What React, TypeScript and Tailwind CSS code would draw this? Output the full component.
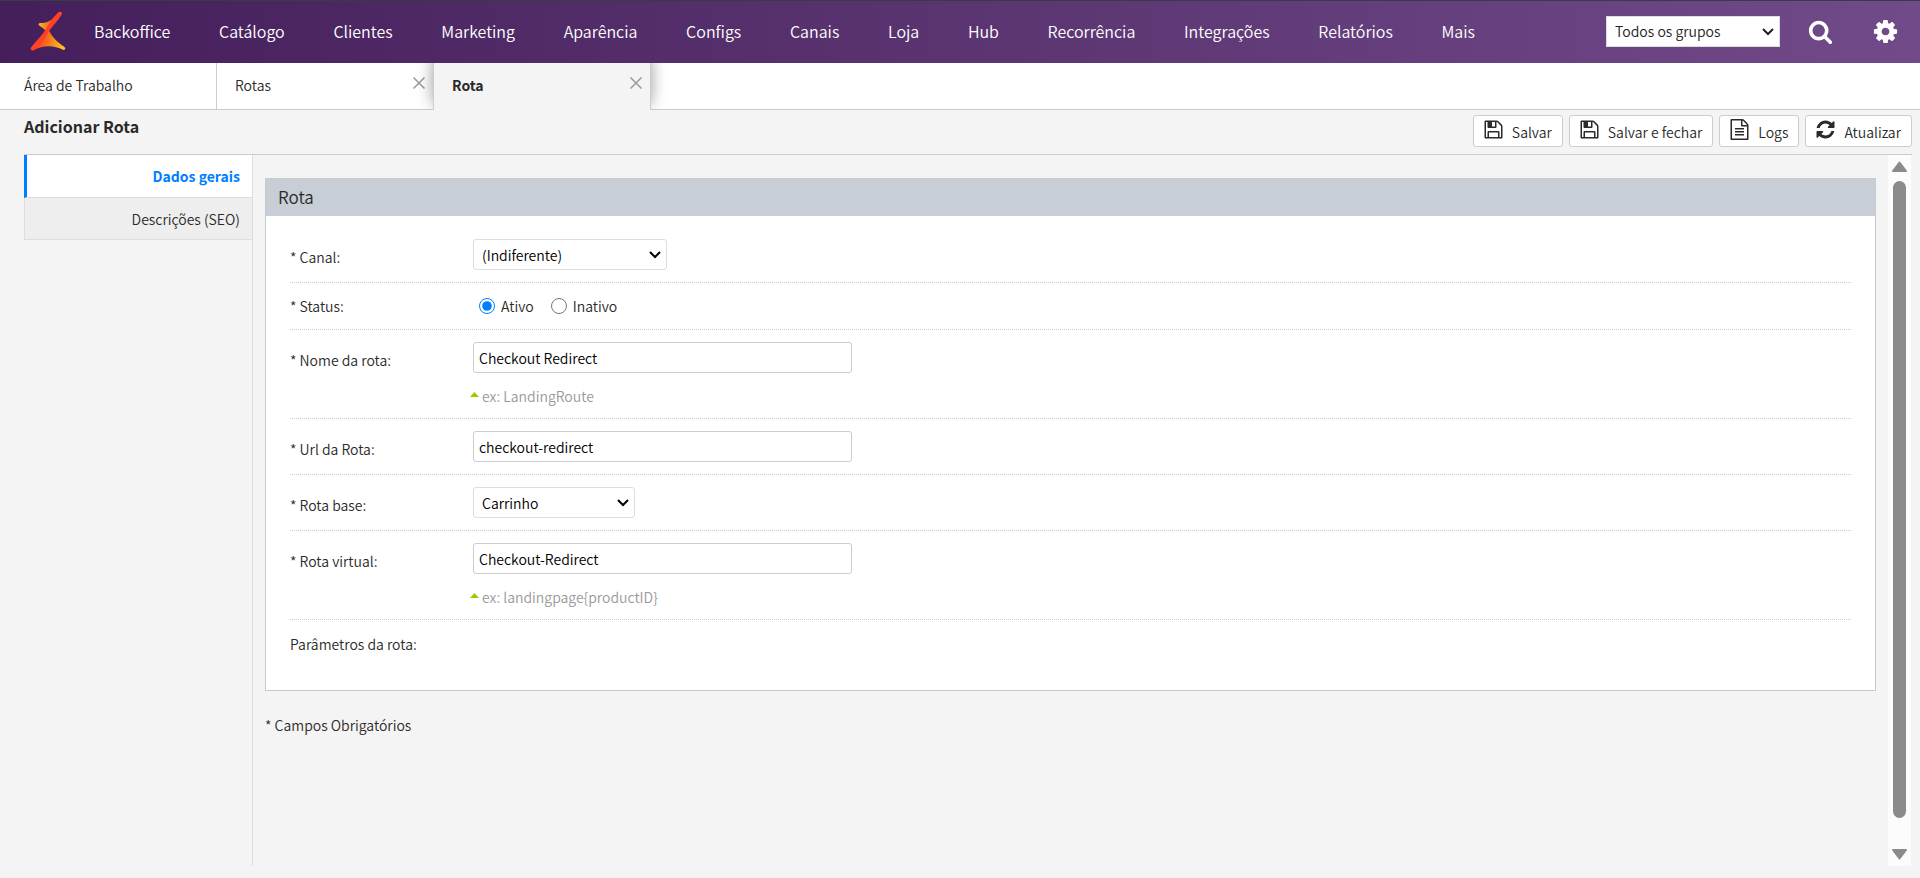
import type { ReactNode } from "react";

const menu = [
  "Backoffice", "Catálogo", "Clientes", "Marketing", "Aparência", "Configs", "Canais",
  "Loja", "Hub", "Recorrência", "Integrações", "Relatórios", "Mais",
];

const icons = {
  search:
    "M1216 832q0-185-131.5-316.5t-316.5-131.5-316.5 131.5-131.5 316.5 131.5 316.5 316.5 131.5 316.5-131.5 131.5-316.5zm512 832q0 52-38 90t-90 38q-54 0-90-38l-343-342q-179 124-399 124-143 0-273.5-55.5t-225-150-150-225-55.5-273.5 55.5-273.5 150-225 225-150 273.5-55.5 273.5 55.5 225 150 150 225 55.5 273.5q0 220-124 399l343 343q37 37 37 90z",
  cog:
    "M1152 896q0-106-75-181t-181-75-181 75-75 181 75 181 181 75 181-75 75-181zm512-109v222q0 12-8 23t-20 13l-185 28q-19 54-39 91 35 50 107 138 10 12 10 25t-9 23q-27 37-99 108t-94 71q-12 0-26-9l-138-108q-44 23-91 38-16 136-29 186-7 28-36 28h-222q-14 0-24.5-8.5t-11.5-21.5l-28-184q-49-16-90-37l-141 107q-10 9-25 9-14 0-25-11-126-114-165-168-7-10-7-23 0-12 8-23 15-21 51-66.5t54-70.5q-27-50-41-99l-183-27q-13-2-21-12.5t-8-23.5v-222q0-12 8-23t19-13l186-28q14-46 39-92-40-57-107-138-10-12-10-24 0-10 9-23 26-36 98.5-107.5t94.5-71.5q13 0 26 10l138 107q44-23 91-38 16-136 29-186 7-28 36-28h222q14 0 24.5 8.5t11.5 21.5l28 184q49 16 90 37l142-107q9-9 24-9 13 0 25 10 129 119 165 170 7 8 7 22 0 12-8 23-15 21-51 66.5t-54 70.5q26 50 41 98l183 28q13 2 21 12.5t8 23.5z",
  save:
    "M512 1536h768v-384h-768v384zm896 0h128v-896q0-14-10-38.5t-20-34.5l-281-281q-10-10-34-20t-39-10v416q0 40-28 68t-68 28h-576q-40 0-68-28t-28-68v-416h-128v1280h128v-416q0-40 28-68t68-28h832q40 0 68 28t28 68v416zm-384-928v-320q0-13-9.5-22.5t-22.5-9.5h-192q-13 0-22.5 9.5t-9.5 22.5v320q0 13 9.5 22.5t22.5 9.5h192q13 0 22.5-9.5t9.5-22.5zm640 32v928q0 40-28 68t-68 28h-1344q-40 0-68-28t-28-68v-1344q0-40 28-68t68-28h928q40 0 88 20t76 48l280 280q28 28 48 76t20 88z",
  file:
    "M1596 380q28 28 48 76t20 88v1152q0 40-28 68t-68 28h-1344q-40 0-68-28t-28-68v-1600q0-40 28-68t68-28h896q40 0 88 20t76 48zm-444-244v376h376q-10-29-22-41l-313-313q-12-12-41-22zm384 1528v-1024h-416q-40 0-68-28t-28-68v-416h-768v1536h1280zm-1024-864q0-14 9-23t23-9h704q14 0 23 9t9 23v64q0 14-9 23t-23 9h-704q-14 0-23-9t-9-23v-64zm736 224q14 0 23 9t9 23v64q0 14-9 23t-23 9h-704q-14 0-23-9t-9-23v-64q0-14 9-23t23-9h704zm0 256q14 0 23 9t9 23v64q0 14-9 23t-23 9h-704q-14 0-23-9t-9-23v-64q0-14 9-23t23-9h704z",
  refresh:
    "M1639 1056q0 5-1 7-64 268-268 434.5t-478 166.5q-146 0-282.5-55t-243.5-157l-129 129q-19 19-45 19t-45-19-19-45v-448q0-26 19-45t45-19h448q26 0 45 19t19 45-19 45l-137 137q71 66 161 102t187 36q134 0 250-65t186-179q11-17 53-117 8-23 30-23h192q13 0 22.5 9.5t9.5 22.5zm25-800v448q0 26-19 45t-45 19h-448q-26 0-45-19t-19-45 19-45l138-138q-148-137-349-137-134 0-250 65t-186 179q-11 17-53 117-8 23-30 23h-199q-13 0-22.5-9.5t-9.5-22.5v-7q65-268 270-434.5t480-166.5q146 0 284 55.5t245 156.5l130-129q19-19 45-19t45 19 19 45z",
};

const actions = [
  { label: "Salvar", icon: icons.save },
  { label: "Salvar e fechar", icon: icons.save },
  { label: "Logs", icon: icons.file },
  { label: "Atualizar", icon: icons.refresh },
];

function Icon({ path, className }: { path: string; className: string }) {
  return (
    <svg viewBox="0 0 1792 1792" className={className} fill="currentColor" aria-hidden="true">
      <path d={path} />
    </svg>
  );
}

function Logo() {
  return (
    <svg viewBox="0 0 36 40" className="h-10 w-9" aria-hidden="true">
      <defs>
        <linearGradient id="wing" x1="9" y1="13" x2="22" y2="16" gradientUnits="userSpaceOnUse">
          <stop offset="0" stopColor="#fdb924" />
          <stop offset="1" stopColor="#f4511e" />
        </linearGradient>
        <linearGradient id="base" x1="4" y1="30" x2="34" y2="36" gradientUnits="userSpaceOnUse">
          <stop offset="0.1" stopColor="#ff3b24" />
          <stop offset="0.5" stopColor="#f77a1c" />
          <stop offset="1" stopColor="#ffc425" />
        </linearGradient>
      </defs>
      <path d="M10 12C15 12.500 19 11 24 7L19 19L15.500 20C14 17 10 16 8.500 13.500Q8.500 12 10 12Z" fill="url(#wing)" />
      <path d="M18 17C21 25 27 31 34.500 36Q36.500 38.500 33.500 39C23 34 14 34 3 39.500Q0 39.500 1 37Z" fill="url(#base)" />
      <path d="M29 .8Q32.500 .5 32 3C28 10 22 15 18.500 21C15 28 10 35 3 39.500Q0 39.500 1 36.500C5 31 11 26 15.500 19C19 12 24 5 29 .8Z" fill="#ff4127" />
    </svg>
  );
}

function CloseButton({ label }: { label: string }) {
  return (
    <button type="button" aria-label={label} className="mt-3 mr-[6px] h-4 w-4 text-[#999]">
      <svg viewBox="0 0 16 16" className="h-4 w-4" stroke="currentColor" strokeWidth="1.5" aria-hidden="true">
        <path d="M2.500 2.500l11 11M13.500 2.500l-11 11" />
      </svg>
    </button>
  );
}

function Select({ id, label, value, className }: { id: string; label?: string; value: string; className: string }) {
  return (
    <div className={`relative h-[31px] ${className}`}>
      <select id={id} aria-label={label} className="block h-full w-full appearance-none rounded-[inherit] border border-[#ddd] bg-white pl-2">
        <option>{value}</option>
      </select>
      <svg viewBox="0 0 12 8" className="pointer-events-none absolute top-3 right-[6px] h-2 w-3" fill="none" stroke="currentColor" strokeWidth="2" aria-hidden="true">
        <path d="M1 1l5 5 5-5" />
      </svg>
    </div>
  );
}

function Row({ label, htmlFor, children }: { label: string; htmlFor: string; children: ReactNode }) {
  return (
    <div className="flex border-b border-dotted border-[#ccc] py-3">
      <label htmlFor={htmlFor} className="mt-2 w-[183px] shrink-0 leading-5">{label}</label>
      <div>{children}</div>
    </div>
  );
}

function TextField({ id, value }: { id: string; value: string }) {
  return (
    <input
      id={id}
      type="text"
      defaultValue={value}
      className="block h-[31px] w-[379px] rounded-[3px] border border-[#ccc] bg-white px-[5px] text-black"
    />
  );
}

function Hint({ children }: { children: ReactNode }) {
  return (
    <p className="mt-[13px] -ml-[3px] flex items-center gap-[3px] leading-5 text-[#999]">
      <svg viewBox="0 0 9 5" className="mb-1 h-[5px] w-[9px]" fill="#9c0" aria-hidden="true">
        <path d="M0 5L4.500 0L9 5z" />
      </svg>
      {children}
    </p>
  );
}

export default function App() {
  return (
    <div className="flex min-h-screen flex-col bg-[#f4f4f4] font-['Noto_Sans_CJK_SC','Open_Sans',sans-serif] text-sm font-[350] text-[#2a2a2a]">
      <header className="flex h-[63px] items-center border-t border-[#33403f] bg-linear-to-r from-[#451f5b] to-[#714a89] pr-[21px] pb-[2px] pl-[30px] text-white">
        <a href="#" aria-label="Início"><Logo /></a>
        <nav className="mr-[131px] ml-7 flex flex-1 justify-between text-base whitespace-nowrap">
          {menu.map((item) => (
            <a key={item} href="#">{item}</a>
          ))}
        </nav>
        <Select id="grupo" label="Grupo" value="Todos os grupos" className="w-[174px] text-[#222]" />
        <button type="button" aria-label="Buscar" className="ml-7">
          <Icon path={icons.search} className="h-[25px] w-[25px]" />
        </button>
        <button type="button" aria-label="Configurações" className="ml-[39px]">
          <Icon path={icons.cog} className="h-[27px] w-[27px]" />
        </button>
      </header>

      <div className="flex h-[47px] overflow-hidden bg-white">
        <div className="flex w-[217px] items-center border-r border-b border-[#ccc] pb-[3px] pl-6">
          <a href="#">Área de Trabalho</a>
        </div>
        <div className="flex w-[216px] justify-between border-b border-[#ccc] pb-[3px] pl-[18px]">
          <a href="#" className="self-center">Rotas</a>
          <CloseButton label="Fechar Rotas" />
        </div>
        <div className="z-10 flex w-[218px] justify-between border-x border-[#ccc] bg-[#f4f4f4] pb-1 pl-[18px] shadow-[0_-6px_16px_rgba(0,0,0,0.4)]">
          <a href="#" className="self-center font-bold">Rota</a>
          <CloseButton label="Fechar Rota" />
        </div>
        <div className="flex-1 border-b border-[#ccc]" />
      </div>

      <div className="mr-2 ml-6 flex h-[45px] justify-between border-b border-[#ccc]">
        <h1 className="mt-1 text-base font-bold">Adicionar Rota</h1>
        <div className="mt-[5px] flex gap-[6px]">
          {actions.map((action) => (
            <button
              key={action.label}
              type="button"
              className="flex h-8 items-center gap-2 rounded-[3px] border border-[#ccc] bg-white pr-[10px] pl-[9px]"
            >
              <Icon path={action.icon} className="mb-[3px] h-[21px] w-[21px]" />
              <span className="pt-[2px]">{action.label}</span>
            </button>
          ))}
        </div>
      </div>

      <div className="mr-[9px] mb-3 ml-6 flex flex-1">
        <nav className="w-[229px] border-r border-[#ddd] text-right">
          <a href="#" className="block h-[43px] border-b border-l-3 border-b-[#ddd] border-l-[#007eff] bg-white pr-3 leading-[42px] font-bold text-[#007eff]">
            Dados gerais
          </a>
          <a href="#" className="block h-[42px] border-b border-l border-[#ddd] bg-[#eee] pr-3 leading-[42px]">
            Descrições (SEO)
          </a>
        </nav>

        <main className="ml-3 min-w-0 flex-1 pt-[23px] pr-3">
          <section className="border border-[#c8cbce] bg-white">
            <h2 className="bg-[#c8ced5] px-3 pb-[2px] text-[17px] leading-[35px]">Rota</h2>
            <form className="px-6 pt-[11px] pb-5">
              <Row label="* Canal:" htmlFor="canal">
                <Select id="canal" value="(Indiferente)" className="w-[194px] rounded-[3px] text-black" />
              </Row>
              <div role="radiogroup" aria-label="Status" className="flex h-[47px] items-center border-b border-dotted border-[#ccc]">
                <span className="w-[183px]">* Status:</span>
                <label className="ml-[6px] flex items-center gap-[6px]">
                  <input type="radio" name="status" defaultChecked className="h-4 w-4 accent-[#007eff]" />
                  Ativo
                </label>
                <label className="ml-[17px] flex items-center gap-[6px]">
                  <input type="radio" name="status" className="h-4 w-4" />
                  Inativo
                </label>
              </div>
              <Row label="* Nome da rota:" htmlFor="nome">
                <TextField id="nome" value="Checkout Redirect" />
                <Hint>ex: LandingRoute</Hint>
              </Row>
              <Row label="* Url da Rota:" htmlFor="url">
                <TextField id="url" value="checkout-redirect" />
              </Row>
              <Row label="* Rota base:" htmlFor="base">
                <Select id="base" value="Carrinho" className="w-[162px] rounded-[3px] text-black" />
              </Row>
              <Row label="* Rota virtual:" htmlFor="virtual">
                <TextField id="virtual" value="Checkout-Redirect" />
                <Hint>{"ex: landingpage{productID}"}</Hint>
              </Row>
              <p className="pt-3 pb-[14px] leading-6">Parâmetros da rota:</p>
            </form>
          </section>
          <p className="mt-[22px] leading-6">* Campos Obrigatórios</p>
        </main>

        <div className="flex w-[23px] flex-col items-center bg-[#fcfcfc] py-[6px]" aria-hidden="true">
          <svg viewBox="0 0 15 11" className="h-[11px] w-[15px]" fill="#8b8b8b" stroke="#8b8b8b" strokeWidth="2" strokeLinejoin="round">
            <path d="M7.500 1.500L14 10H1z" />
          </svg>
          <div className="mt-[9px] mb-[31px] w-[13px] flex-1 rounded-full bg-[#8b8b8b]" />
          <svg viewBox="0 0 15 11" className="h-[11px] w-[15px]" fill="#8b8b8b" stroke="#8b8b8b" strokeWidth="2" strokeLinejoin="round">
            <path d="M7.500 9.500L14 1H1z" />
          </svg>
        </div>
      </div>
    </div>
  );
}
